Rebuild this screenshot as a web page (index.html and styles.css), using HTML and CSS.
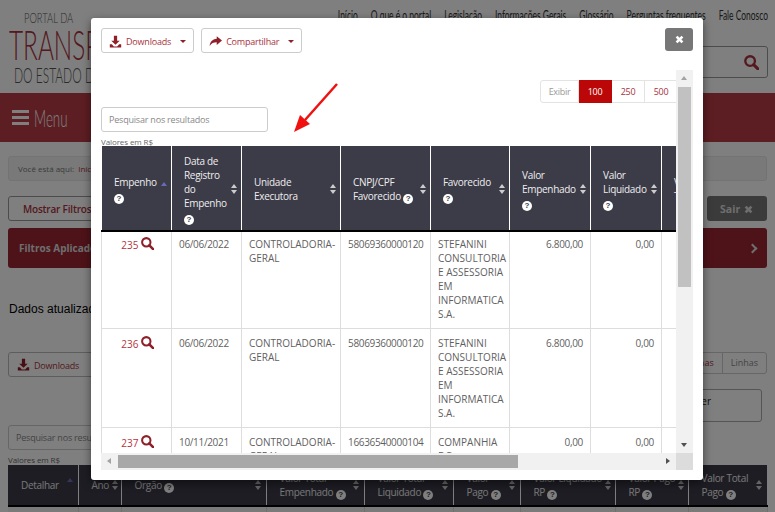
FILE: index.html
```html
<!DOCTYPE html>
<html>
<head>
    <meta charset="utf-8">
    <title>Portal da Transparência</title>
    <link rel="stylesheet" href="styles.css">
</head>
<body>
    <svg class="defs" width="0" height="0">
        <symbol id="i-download" viewBox="0 0 16 16"><path d="M6 1h4v6h3.200L8 12 2.800 7H6zM1 11.500h2.500L6 14h4l2.500-2.500H15V15.500H1z"/></symbol>
        <symbol id="i-share" viewBox="0 0 16 16"><path d="M9.500 1.500 16 6.800l-6.500 5.400V9C5.500 9 3 10 .8 13.500 1.200 8.500 4 5 9.500 4.500z"/></symbol>
        <symbol id="i-search" viewBox="0 0 14 14"><circle cx="5.700" cy="5.700" r="4.500" fill="none" stroke="currentColor" stroke-width="2.200"/><path d="M9 9l4 4" stroke="currentColor" stroke-width="2.800" stroke-linecap="round"/></symbol>
        <symbol id="i-times" viewBox="0 0 10 10"><path d="M1.500 3.200 3.200 1.500 5 3.300 6.800 1.500 8.500 3.200 6.700 5 8.500 6.800 6.800 8.500 5 6.700 3.200 8.500 1.500 6.800 3.300 5z"/></symbol>
    </svg>

    <header class="site-head">
        <div class="logo">
            <span class="logo-small">PORTAL DA</span>
            <span class="logo-big">TRANSPARÊNCIA</span>
            <span class="logo-mid">DO ESTADO DE SÃO PAULO</span>
        </div>
        <div class="head-right">
            <nav class="top-nav">
                <a>Início</a><a>O que é o portal</a><a>Legislação</a><a>Informações Gerais</a><a>Glossário</a><a>Perguntas frequentes</a><a>Fale Conosco</a>
            </nav>
            <div class="site-search"><svg class="site-search-icon"><use href="#i-search"/></svg></div>
        </div>
    </header>
    <div class="menu-bar">
        <span class="burger"><i></i><i></i><i></i></span>
        <span class="menu-text">Menu</span>
    </div>

    <main class="page">
        <div class="breadcrumb">Você está aqui: &nbsp;<a>Início</a></div>
        <div class="filter-row">
            <button class="btn-filter">Mostrar Filtros</button>
            <button class="btn-exit">Sair <svg class="exit-icon"><use href="#i-times"/></svg></button>
        </div>
        <div class="applied">
            <b>Filtros Aplicados</b>
            <span class="chevron"></span>
        </div>
        <p class="updated">Dados atualizados em 10/06/2022</p>
        <div class="tools-row">
            <button class="btn-down"><svg class="btn-icon"><use href="#i-download"/></svg>Downloads</button>
            <div class="view-group"><a>Colunas</a><a>Linhas</a></div>
        </div>
        <div class="filter-box"><span>Escolher</span></div>
        <input class="page-search" type="text" placeholder="Pesquisar nos resultados">
        <div class="small-note">Valores em R$</div>
        <table class="page-table">
            <colgroup>
                <col class="p1"><col class="p2"><col class="p3"><col class="p4"><col class="p5"><col class="p6"><col class="p7"><col class="p8"><col class="p9">
            </colgroup>
            <thead>
                <tr>
                    <th><div class="th-in"><span>Detalhar</span><span class="sort sort-up"></span></div></th>
                    <th><div class="th-in"><span>Ano</span><span class="sort"></span></div></th>
                    <th><div class="th-in"><span>Orgão <i class="help">?</i></span><span class="sort"></span></div></th>
                    <th><div class="th-in"><span>Valor Total<br>Empenhado <i class="help">?</i></span><span class="sort"></span></div></th>
                    <th><div class="th-in"><span>Valor Total<br>Liquidado <i class="help">?</i></span><span class="sort"></span></div></th>
                    <th><div class="th-in"><span>Valor<br>Pago <i class="help">?</i></span><span class="sort"></span></div></th>
                    <th><div class="th-in"><span>Valor Liquidado<br>RP <i class="help">?</i></span><span class="sort"></span></div></th>
                    <th><div class="th-in"><span>Valor Pago<br>RP <i class="help">?</i></span><span class="sort"></span></div></th>
                    <th><div class="th-in"><span>Valor Total<br>Pago <i class="help">?</i></span><span class="sort"></span></div></th>
                </tr>
            </thead>
            <tbody>
                <tr><td></td><td></td><td></td><td></td><td></td><td></td><td></td><td></td><td></td></tr>
            </tbody>
        </table>
    </main>

    <div class="overlay"></div>

    <div class="modal">
        <div class="modal-top">
            <button class="btn-out"><svg class="btn-icon"><use href="#i-download"/></svg>Downloads<span class="caret"></span></button>
            <button class="btn-out"><svg class="btn-icon"><use href="#i-share"/></svg>Compartilhar<span class="caret"></span></button>
            <button class="btn-close"><svg class="close-icon"><use href="#i-times"/></svg></button>
        </div>
        <div class="scroll-pane">
            <div class="scroll-view">
                <div class="pager">
                    <span class="pager-label">Exibir</span>
                    <a class="active">100</a>
                    <a>250</a>
                    <a>500</a>
                </div>
                <input class="result-search" type="text" placeholder="Pesquisar nos resultados">
                <div class="small-note">Valores em R$</div>
                <table class="data-table">
                    <colgroup>
                        <col class="c1"><col class="c2"><col class="c3"><col class="c4"><col class="c5"><col class="c6"><col class="c7"><col class="c8">
                    </colgroup>
                    <thead>
                        <tr>
                            <th><div class="th-in"><span>Empenho <i class="help">?</i></span><span class="sort sort-up"></span></div></th>
                            <th><div class="th-in"><span>Data de Registro do Empenho <i class="help">?</i></span><span class="sort"></span></div></th>
                            <th><div class="th-in"><span>Unidade Executora</span><span class="sort"></span></div></th>
                            <th><div class="th-in"><span>CNPJ/CPF Favorecido <i class="help">?</i></span><span class="sort"></span></div></th>
                            <th><div class="th-in"><span>Favorecido <i class="help">?</i></span><span class="sort"></span></div></th>
                            <th><div class="th-in"><span>Valor Empenhado <i class="help">?</i></span><span class="sort"></span></div></th>
                            <th><div class="th-in"><span>Valor Liquidado <i class="help">?</i></span><span class="sort"></span></div></th>
                            <th><div class="th-in"><span>Valor Pago Total <i class="help">?</i></span><span class="sort"></span></div></th>
                        </tr>
                    </thead>
                    <tbody>
                        <tr>
                            <td class="cell-link"><a>235</a> <svg class="row-icon"><use href="#i-search"/></svg></td>
                            <td class="digits">06/06/2022</td>
                            <td>CONTROLADORIA-GERAL</td>
                            <td class="digits">58069360000120</td>
                            <td>STEFANINI CONSULTORIA E ASSESSORIA EM INFORMATICA S.A.</td>
                            <td class="num">6.800,00</td>
                            <td class="num">0,00</td>
                            <td class="num">0,00</td>
                        </tr>
                        <tr>
                            <td class="cell-link"><a>236</a> <svg class="row-icon"><use href="#i-search"/></svg></td>
                            <td class="digits">06/06/2022</td>
                            <td>CONTROLADORIA-GERAL</td>
                            <td class="digits">58069360000120</td>
                            <td>STEFANINI CONSULTORIA E ASSESSORIA EM INFORMATICA S.A.</td>
                            <td class="num">6.800,00</td>
                            <td class="num">0,00</td>
                            <td class="num">0,00</td>
                        </tr>
                        <tr>
                            <td class="cell-link"><a>237</a> <svg class="row-icon"><use href="#i-search"/></svg></td>
                            <td class="digits">10/11/2021</td>
                            <td>CONTROLADORIA-GERAL</td>
                            <td class="digits">16636540000104</td>
                            <td>COMPANHIA DO METROPOLITANO</td>
                            <td class="num">0,00</td>
                            <td class="num">0,00</td>
                            <td class="num">0,00</td>
                        </tr>
                    </tbody>
                </table>
            </div>
            <div class="vbar">
                <span class="arrow arrow-up"></span>
                <span class="vthumb"></span>
                <span class="arrow arrow-down"></span>
            </div>
            <div class="hbar">
                <span class="arrow arrow-left"></span>
                <span class="hthumb"></span>
                <span class="arrow arrow-right"></span>
            </div>
            <div class="corner"></div>
        </div>
    </div>

    <svg class="red-arrow" width="50" height="54" viewBox="0 0 50 54">
        <path d="M45 1 13 37" stroke="#f01010" stroke-width="2.500" fill="none"/>
        <path d="M2 49 8 32 18 41z" fill="#f01010"/>
    </svg>
</body>
</html>
```

FILE: styles.css
```css
* {
    box-sizing: border-box;
}
html, body {
    margin: 0;
    padding: 0;
}
body {
    width: 775px;
    height: 512px;
    overflow: hidden;
    position: relative;
    background-color: #fff;
    font-family: "Open Sans", "Noto Sans", sans-serif;
    font-size: 10px;
    color: #555;
}
button {
    font-family: inherit;
    cursor: pointer;
}
.defs {
    position: absolute;
}

/* header */
.site-head {
    height: 93px;
    display: flex;
    justify-content: space-between;
}
.logo {
    padding: 11px 0 0 9px;
    width: 320px;
    color: #555;
    font-family: "Lato", sans-serif;
    font-weight: 300;
    white-space: nowrap;
    overflow: hidden;
}
.logo span {
    display: block;
    transform-origin: left top;
}
.logo-small {
    font-size: 13px;
    line-height: 14px;
    margin-left: 15px;
    transform: scaleX(.72);
}
.logo-big {
    font-size: 42px;
    line-height: 38px;
    color: #a8323c;
    transform: scaleX(.58);
}
.logo-mid {
    font-size: 21px;
    line-height: 24px;
    margin-left: 5px;
    transform: scaleX(.57);
}
.head-right {
    width: 440px;
    padding: 8px 7px 0 0;
    display: flex;
    flex-direction: column;
    align-items: flex-end;
}
.top-nav {
    flex: none;
    display: flex;
    justify-content: flex-end;
    gap: 20px;
    width: 433px;
    font-family: "Lato", sans-serif;
    font-size: 13px;
    line-height: 14px;
    color: #333;
    white-space: nowrap;
    transform: scaleX(.65);
    transform-origin: right top;
}
.site-search {
    width: 300px;
    height: 32px;
    margin-top: 24px;
    border: 1px solid #999;
    border-radius: 3px;
    display: flex;
    justify-content: flex-end;
    align-items: center;
    padding-right: 8px;
}
.site-search-icon {
    width: 15px;
    height: 15px;
    color: #a8323c;
}
.menu-bar {
    height: 49px;
    background-color: #b83c44;
    display: flex;
    align-items: center;
    padding: 0 12px;
}
.burger {
    width: 17px;
    display: flex;
    flex-direction: column;
    gap: 3px;
    margin-right: 5px;
}
.burger i {
    display: block;
    height: 3px;
    background-color: #fff;
}
.menu-text {
    font-family: "Lato", sans-serif;
    font-weight: 300;
    font-size: 23px;
    transform: scaleX(.58);
    transform-origin: left center;
    color: #fff;
}

/* page under the modal */
.page {
    padding: 14px 8px 0;
}
.breadcrumb {
    height: 25px;
    background-color: #f2f2f2;
    border: 1px solid #e6e6e6;
    border-radius: 3px;
    line-height: 23px;
    padding-left: 9px;
    font-size: 8px;
    color: #777;
}
.breadcrumb a {
    color: #a8323c;
}
.filter-row {
    display: flex;
    justify-content: space-between;
    margin-top: 15px;
}
.btn-filter {
    height: 25px;
    width: 130px;
    background-color: #fff;
    border: 1px solid #999;
    border-radius: 3px;
    color: #a8323c;
    font-size: 10px;
    font-weight: 600;
    letter-spacing: -.2px;
    text-align: left;
    padding-left: 14px;
}
.btn-exit {
    height: 25px;
    width: 60px;
    background-color: #777;
    border: 0;
    border-radius: 3px;
    color: #ddd;
    font-size: 10.500px;
    font-weight: 700;
}
.exit-icon {
    width: 11px;
    height: 11px;
    fill: #ddd;
    vertical-align: -2px;
}
.applied {
    height: 40px;
    margin-top: 7px;
    background-color: #9a2632;
    border-radius: 3px;
    color: #ddd;
    display: flex;
    justify-content: space-between;
    align-items: center;
    padding: 0 11px;
    font-size: 10px;
}
.chevron {
    width: 7px;
    height: 7px;
    border-top: 2px solid #ddd;
    border-right: 2px solid #ddd;
    transform: rotate(45deg);
}
.updated {
    margin: 34px 0 0 1px;
    font-family: "Liberation Sans", Arial, sans-serif;
    font-size: 12px;
    line-height: 14px;
    color: #000;
}
.tools-row {
    display: flex;
    justify-content: space-between;
    align-items: flex-start;
    margin-top: 36px;
}
.btn-down {
    height: 25px;
    width: 130px;
    background-color: #fff;
    border: 1px solid #bbb;
    border-radius: 3px;
    color: #a8323c;
    font-size: 9px;
    letter-spacing: -.2px;
    text-align: left;
    padding-left: 8px;
}
.view-group {
    display: flex;
    height: 22px;
    border: 1px solid #ccc;
    border-radius: 3px;
    line-height: 20px;
    font-size: 9px;
}
.view-group a {
    padding: 0 8px;
    color: #a8323c;
}
.view-group a + a {
    border-left: 1px solid #ccc;
    color: #888;
}
.filter-box {
    height: 33px;
    width: 300px;
    margin: 12px 5px 0 auto;
    border: 1px solid #aaa;
    border-radius: 3px;
    text-align: right;
    padding: 4px 50px 0 0;
    color: #222;
    font-size: 10px;
}
.page-search {
    display: block;
    width: 167px;
    height: 25px;
    margin-top: 3px;
    border: 1px solid #ccc;
    border-radius: 3px;
    padding: 0 7px;
    font-family: inherit;
    font-size: 9px;
    letter-spacing: -.2px;
}
.small-note {
    font-size: 8px;
    letter-spacing: -.1px;
    line-height: 9px;
    color: #666;
}
.page .small-note {
    margin-top: 5px;
    margin-bottom: 1px;
}
.page-table {
    width: 759px;
    table-layout: fixed;
    border-collapse: collapse;
}
.p1 { width: 70px; }
.p2 { width: 43px; }
.p3 { width: 145px; }
.p4 { width: 98px; }
.p5 { width: 89px; }
.p6 { width: 67px; }
.p7 { width: 95px; }
.p8 { width: 73px; }
.p9 { width: 79px; }
.page-table th {
    height: 41px;
    background-color: #3c3b48;
    color: #eee;
    border-right: 1px solid #fff;
    border-bottom: 2px solid #000;
    font-size: 10px;
    font-weight: 500;
    letter-spacing: -.3px;
    line-height: 14px;
    text-align: left;
    padding: 0 4px 0 13px;
    white-space: nowrap;
    overflow: hidden;
}
.page-table td {
    height: 20px;
    border-right: 1px solid #ddd;
    background-color: #f4f4f4;
}

/* dim layer */
.overlay {
    position: absolute;
    top: 0;
    left: 0;
    width: 775px;
    height: 512px;
    background-color: rgba(0, 0, 0, .5);
}

/* modal */
.modal {
    position: absolute;
    top: 18px;
    left: 91px;
    width: 612px;
    height: 462px;
    background-color: #fff;
    border-radius: 3px;
    box-shadow: 0 3px 9px rgba(0, 0, 0, .5);
    padding: 10px 10px 0;
}
.modal-top {
    display: flex;
    align-items: flex-start;
    gap: 7px;
    height: 42px;
}
.btn-out {
    height: 25px;
    display: flex;
    align-items: center;
    background-color: #fff;
    border: 1px solid #ccc;
    border-radius: 3px;
    padding: 1px 7px 0;
    color: #a8323c;
    font-size: 9px;
    letter-spacing: -.2px;
}
.btn-icon {
    width: 13px;
    height: 13px;
    fill: #8f1f28;
    margin-right: 4px;
    vertical-align: -2px;
}
.caret {
    width: 0;
    height: 0;
    margin-left: 9px;
    border-top: 3px solid #8f1f28;
    border-left: 3px solid transparent;
    border-right: 3px solid transparent;
}
.btn-close {
    width: 28px;
    height: 23px;
    margin-left: auto;
    background-color: #777;
    border: 0;
    border-radius: 3px;
    padding: 0;
    display: flex;
    align-items: center;
    justify-content: center;
}
.close-icon {
    width: 11px;
    height: 11px;
    fill: #fff;
}
.scroll-pane {
    display: grid;
    grid-template-columns: 575px 17px;
    grid-template-rows: 383px 17px;
}
.scroll-view {
    overflow: hidden;
    padding-top: 10px;
}
.pager {
    display: flex;
    justify-content: flex-end;
    height: 23px;
    margin-right: -2px;
    font-size: 9px;
    letter-spacing: -.3px;
    line-height: 21px;
    text-align: center;
    color: #a8323c;
}
.pager span, .pager a {
    width: 33px;
    border: 1px solid #e3e3e3;
    border-left: 0;
}
.pager .pager-label {
    width: 39px;
    border-left: 1px solid #e3e3e3;
    border-radius: 3px 0 0 3px;
    color: #999;
}
.pager .active {
    background-color: #bb0707;
    border-color: #bb0707;
    color: #fff;
}
.result-search {
    display: block;
    width: 167px;
    height: 25px;
    margin-top: 4px;
    border: 1px solid #ccc;
    border-radius: 3px;
    padding: 0 7px;
    font-family: inherit;
    font-size: 9px;
    letter-spacing: -.2px;
}
.result-search::placeholder, .page-search::placeholder {
    color: #888;
}
.scroll-view .small-note {
    margin-top: 5px;
}
.data-table {
    width: 639px;
    table-layout: fixed;
    border-collapse: collapse;
}
.c1 { width: 70px; }
.c2 { width: 70px; }
.c3 { width: 99px; }
.c4 { width: 90px; }
.c5 { width: 79px; }
.c6 { width: 81px; }
.c7 { width: 71px; }
.c8 { width: 79px; }
.data-table th {
    height: 85px;
    padding: 2px 3px 0 12px;
    background-color: #3c3b48;
    color: #eee;
    border-left: 1px solid #fff;
    border-right: 1px solid #fff;
    border-bottom: 2px solid #000;
    font-weight: 500;
    letter-spacing: -.3px;
    line-height: 14px;
    text-align: left;
}
.th-in {
    display: flex;
    justify-content: space-between;
    align-items: center;
    gap: 3px;
}
.help {
    display: inline-block;
    width: 10px;
    height: 10px;
    border-radius: 50%;
    background-color: #fff;
    color: #3c3b48;
    font-family: "Liberation Sans", sans-serif;
    font-size: 8px;
    font-style: normal;
    font-weight: 700;
    line-height: 10px;
    letter-spacing: 0;
    text-align: center;
    vertical-align: -1px;
}
.sort {
    flex: none;
    width: 7px;
    height: 10px;
    position: relative;
}
.sort::before, .sort::after {
    content: "";
    position: absolute;
    left: 0;
    border-left: 3.500px solid transparent;
    border-right: 3.500px solid transparent;
}
.sort::before {
    top: 0;
    border-bottom: 4.500px solid #ccc;
}
.sort::after {
    bottom: 0;
    border-top: 4.500px solid #ccc;
}
.sort-up {
    margin-bottom: 5px;
}
.sort-up::before {
    border-bottom-color: #6a6ab8;
}
.sort-up::after {
    display: none;
}
.data-table td {
    padding: 7px 3px 7px 7px;
    border: 1px solid #ddd;
    border-top: 0;
    line-height: 14px;
    vertical-align: top;
    color: #5f5f5f;
}
.data-table tbody tr:first-child td {
    padding-top: 5px;
}
.data-table td.digits, .data-table td.num {
    letter-spacing: -.33px;
}
.data-table td.num {
    text-align: right;
    padding-right: 7px;
}
.data-table td.cell-link {
    text-align: right;
    padding-right: 17px;
    white-space: nowrap;
}
.cell-link a {
    color: #b5333c;
}
.row-icon {
    width: 13px;
    height: 13px;
    color: #8f1f28;
    vertical-align: -1px;
}

/* fake scrollbars */
.vbar {
    background-color: #f1f1f1;
    display: flex;
    flex-direction: column;
    align-items: center;
    padding-top: 17px;
    position: relative;
}
.vthumb {
    width: 13px;
    height: 200px;
    background-color: #c1c1c1;
}
.hbar {
    background-color: #f1f1f1;
    position: relative;
    padding: 2px 0 0 17px;
}
.hthumb {
    display: block;
    width: 400px;
    height: 13px;
    background-color: #a8a8a8;
}
.corner {
    background-color: #dcdcdc;
}
.arrow {
    position: absolute;
    width: 0;
    height: 0;
}
.arrow-up {
    top: 6px;
    left: 5px;
    border-left: 3.500px solid transparent;
    border-right: 3.500px solid transparent;
    border-bottom: 4px solid #a3a3a3;
}
.arrow-down {
    bottom: 6px;
    left: 5px;
    border-left: 3.500px solid transparent;
    border-right: 3.500px solid transparent;
    border-top: 4px solid #505050;
}
.arrow-left {
    top: 5px;
    left: 6px;
    border-top: 3.500px solid transparent;
    border-bottom: 3.500px solid transparent;
    border-right: 4px solid #a3a3a3;
}
.arrow-right {
    top: 5px;
    right: 6px;
    border-top: 3.500px solid transparent;
    border-bottom: 3.500px solid transparent;
    border-left: 4px solid #505050;
}

/* annotation drawn over the screenshot */
.red-arrow {
    position: absolute;
    top: 83px;
    left: 292px;
}
```
